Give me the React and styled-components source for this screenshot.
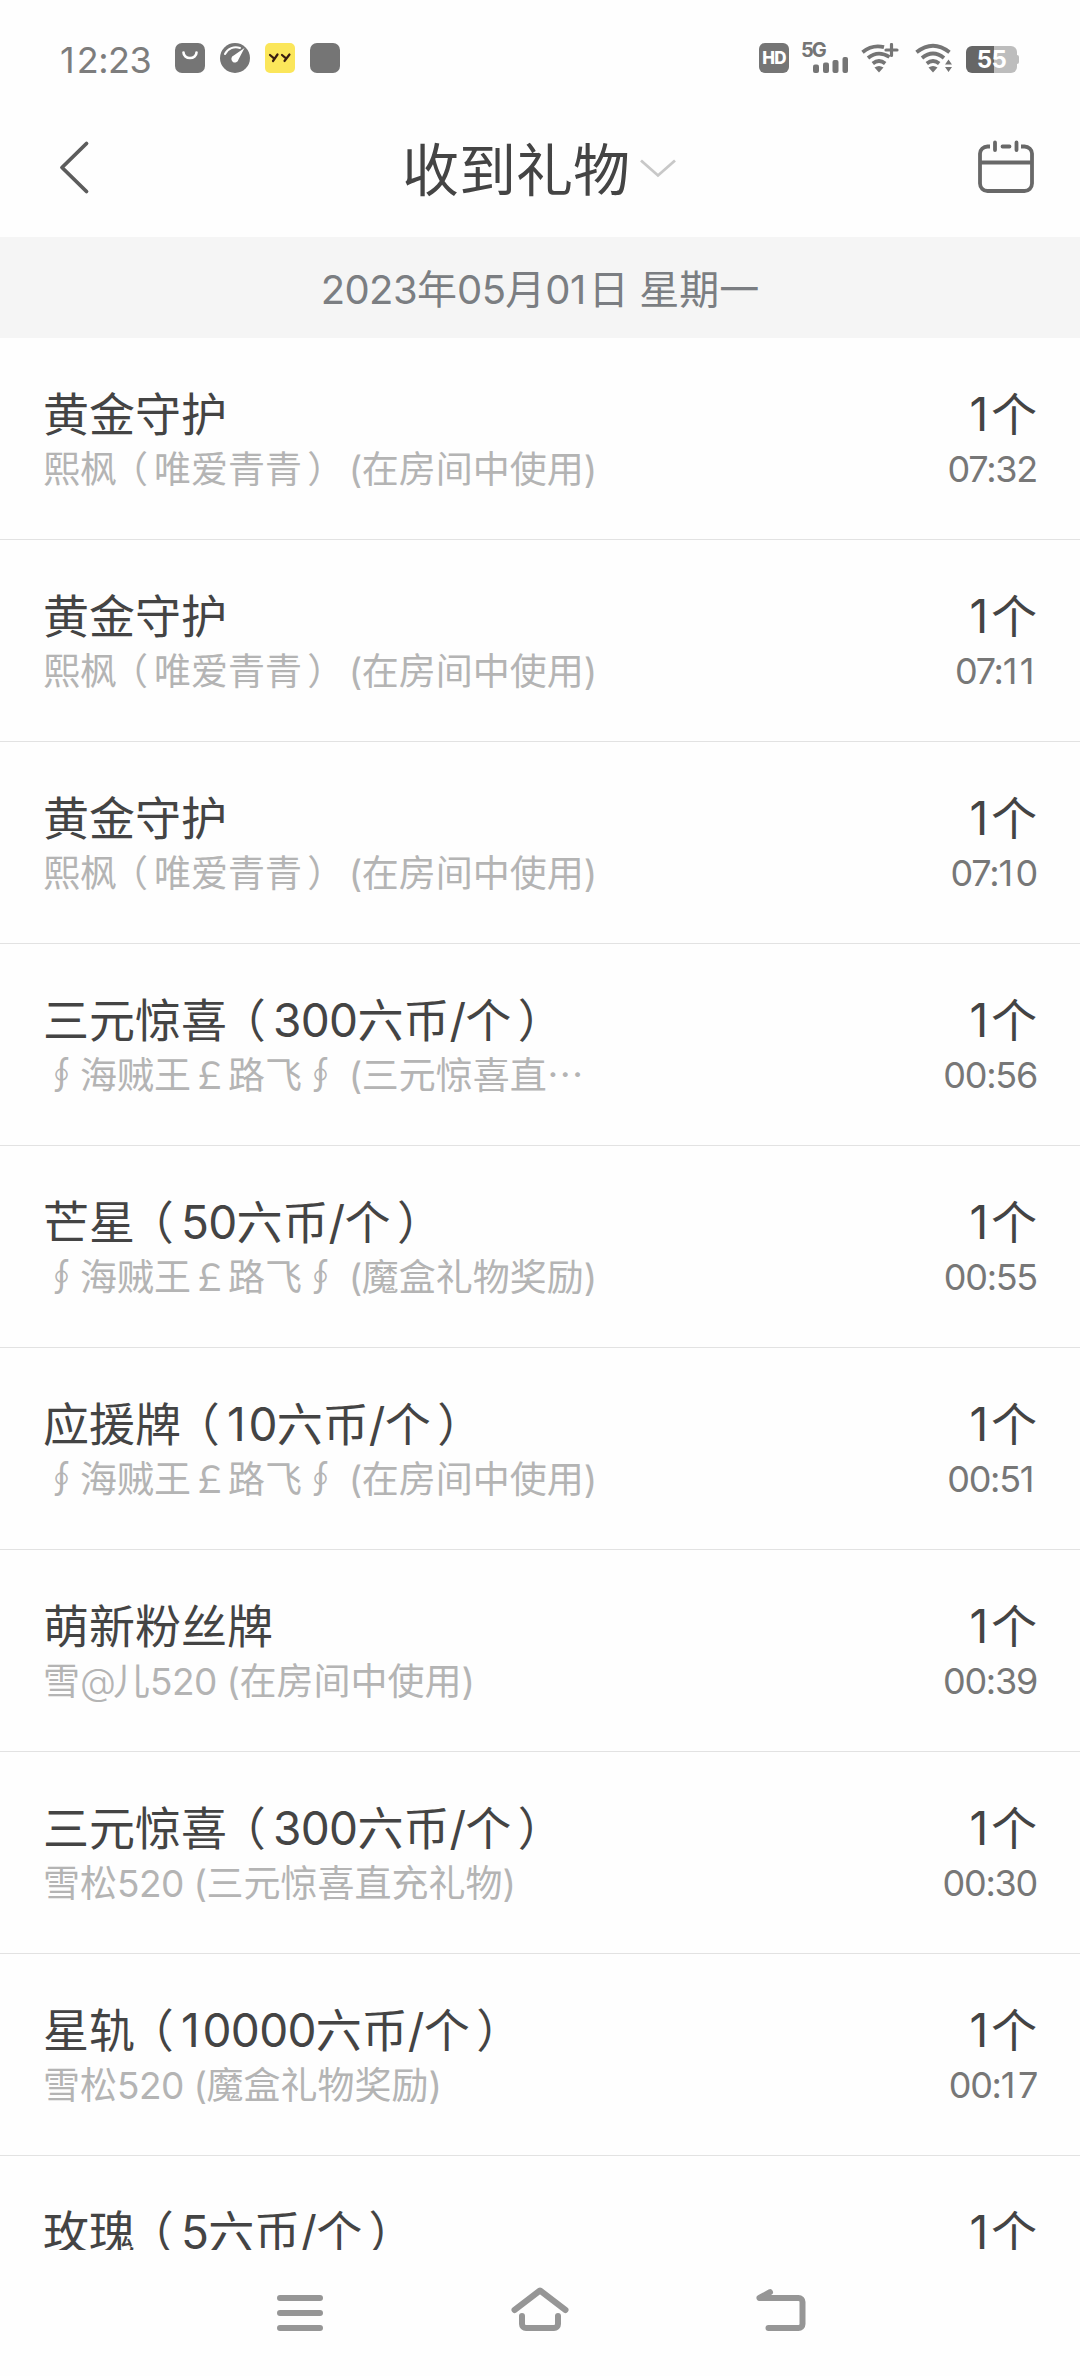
import React from 'react';
import styled, { createGlobalStyle } from 'styled-components';

const gifts = [
  { name: '黄金守护', from: '熙枫（唯爱青青） (在房间中使用)', time: '07:32' },
  { name: '黄金守护', from: '熙枫（唯爱青青） (在房间中使用)', time: '07:11' },
  { name: '黄金守护', from: '熙枫（唯爱青青） (在房间中使用)', time: '07:10' },
  { name: '三元惊喜（300六币/个）', from: '∮海贼王￡路飞∮ (三元惊喜直…', time: '00:56' },
  { name: '芒星（50六币/个）', from: '∮海贼王￡路飞∮ (魔盒礼物奖励)', time: '00:55' },
  { name: '应援牌（10六币/个）', from: '∮海贼王￡路飞∮ (在房间中使用)', time: '00:51' },
  { name: '萌新粉丝牌', from: '雪@儿520 (在房间中使用)', time: '00:39' },
  { name: '三元惊喜（300六币/个）', from: '雪松520 (三元惊喜直充礼物)', time: '00:30' },
  { name: '星轨（10000六币/个）', from: '雪松520 (魔盒礼物奖励)', time: '00:17' },
  { name: '玫瑰（5六币/个）', from: '', time: '' },
];

// latin runs get their own font, "1", "@" and the wide brackets their own spacing
const Mixed = ({ children }) =>
  children
    .split(/(1|@|（|）|[\x20-\x30\x32-\x3f\x41-\x7e]+)/)
    .filter(Boolean)
    .map((part, i) => {
      if (part === '1') return <One key={i}>1</One>;
      if (part === '@') return <At key={i}>@</At>;
      if (part === '（') return <Bracket key={i} $left={0.34}>（</Bracket>;
      if (part === '）') return <Bracket key={i} $left={0.14}>）</Bracket>;
      return /^[\x20-\x7e]/.test(part) ? <Latin key={i}>{part}</Latin> : part;
    });

const StatusIcons = () => (
  <svg width="165" height="30" viewBox="0 0 165 30">
    <rect width="30" height="30" rx="7" fill="#757575" />
    <path d="M8.5 9.5a6.5 5.5 0 0 0 13 0" fill="none" stroke="#fff" strokeWidth="2.6" strokeLinecap="round" />
    <circle cx="60" cy="15" r="15" fill="#757575" />
    <path d="M50 11a12 12 0 0 1 15-6" fill="none" stroke="#fff" strokeWidth="2" strokeLinecap="round" />
    <path d="M69.5 5L63.5 16.5a3.6 3.6 0 1 1-4.8-4z" fill="#fff" />
    <rect x="90" width="30" height="30" rx="5" fill="#fbe65a" />
    <path
      d="M95 12l4 3.4M102.500 11.500l-4.500 6.500M107 12l4 3.400M114.500 11.500l-5 6.500"
      fill="none"
      stroke="#3a1d10"
      strokeWidth="2.200"
      strokeLinecap="round"
    />
    <rect x="135" width="30" height="30" rx="7" fill="#757575" />
  </svg>
);

const Wifi = ({ plus }) => (
  <svg width="38" height="30" viewBox="0 0 38 30">
    <g fill="none" stroke="#757575" strokeWidth="3.800">
      <path d={plus ? 'M1.500 9.200Q11.500 1.200 23 4.200' : 'M1.500 9.200Q18 -3.800 34.500 9.200'} />
      <path d={plus ? 'M7 15Q17 6.800 28.500 14' : 'M7 15Q18 6 29 15'} />
      <path d="M11.800 20.500Q18 15.500 24.200 20.500" />
    </g>
    <path d="M13.500 24.500Q18 21.500 22.500 24.500L18 29.500z" fill="#757575" />
    {plus ? (
      <path d="M30.500 1.500v11M25 7h11" stroke="#757575" strokeWidth="3.200" strokeLinecap="round" />
    ) : (
      <path d="M30 21.500l3.500-5 3.500 5zM30 24l3.500 5 3.500-5z" fill="#757575" />
    )}
  </svg>
);

const SignalBars = () => (
  <svg width="36" height="16" viewBox="0 0 36 16">
    <g fill="#757575">
      <rect x="0" y="7.500" width="6" height="8.500" rx="2" />
      <rect x="10" y="5.500" width="6" height="10.500" rx="2" />
      <rect x="19.500" y="3" width="6" height="13" rx="2" />
      <rect x="29.500" y="0" width="5.500" height="16" rx="2" />
    </g>
  </svg>
);

const BackIcon = () => (
  <svg width="32" height="56" viewBox="0 0 32 56">
    <path d="M28.500 4.500L4 28.500 28.500 52.500" fill="none" stroke="#5c5c5c" strokeWidth="3.800" strokeLinecap="round" strokeLinejoin="round" />
  </svg>
);

const DropIcon = () => (
  <svg width="36" height="20" viewBox="0 0 36 20">
    <path d="M1 1.500L18 16.500 35 1.500" fill="none" stroke="#c8c8c8" strokeWidth="2.800" />
  </svg>
);

const CalendarIcon = () => (
  <svg width="56" height="54" viewBox="0 0 56 54">
    <g fill="none" stroke="#686868" strokeWidth="3.800">
      <path d="M12 6.500H9.500a7.500 7 0 0 0-7.500 7V43.500a7.500 7.500 0 0 0 7.500 7.500H46.500a7.500 7.500 0 0 0 7.500-7.500V13.500a7.500 7 0 0 0-7.500-7H43" />
      <path d="M2 22.500H54" />
      <path d="M24.500 6.500H31.500M17 2.500V10M38.500 2.500V10" strokeLinecap="round" />
    </g>
  </svg>
);

const App = () => (
  <Screen>
    <GlobalStyle />
    <StatusBar>
      <Clock>
        <Mixed>12:23</Mixed>
      </Clock>
      <StatusIcons />
      <StatusRight>
        <HdBadge>HD</HdBadge>
        <Network>
          <span>5G</span>
          <SignalBars />
        </Network>
        <Wifi plus />
        <Wifi />
        <Battery>
          <BatteryBody>55</BatteryBody>
          <BatteryTip />
        </Battery>
      </StatusRight>
    </StatusBar>

    <Header>
      <BackIcon />
      <Title>
        <span>收到礼物</span>
        <DropIcon />
      </Title>
      <CalendarIcon />
    </Header>

    <DateBar>
      <span>
        <Mixed>2023年05月01日 星期一</Mixed>
      </span>
    </DateBar>

    <List>
      {gifts.map((gift, i) => (
        <Row key={i}>
          <div>
            <Name>
              <Mixed>{gift.name}</Mixed>
            </Name>
            <From>
              <Mixed>{gift.from}</Mixed>
            </From>
          </div>
          <Side>
            <Name>
              <Mixed>1个</Mixed>
            </Name>
            <Time>
              <Mixed>{gift.time}</Mixed>
            </Time>
          </Side>
        </Row>
      ))}
    </List>

    <NavBar>
      <svg width="46" height="36" viewBox="0 0 46 36">
        <path d="M3 3H43M3 18H43M3 33H43" stroke="#969696" strokeWidth="6" strokeLinecap="round" />
      </svg>
      <svg width="58" height="44" viewBox="0 0 58 44">
        <g fill="none" stroke="#969696" strokeWidth="6" strokeLinecap="round" strokeLinejoin="round">
          <path d="M3.500 23L29 3.500 54.500 23" />
          <path d="M11 29V37a4 4 0 0 0 4 4H43a4 4 0 0 0 4-4V29" />
        </g>
      </svg>
      <svg width="50" height="42" viewBox="0 0 50 42">
        <path
          d="M14 3.200L3.500 9H42.500a4 4 0 0 1 4 4V35a4 4 0 0 1-4 4H12.500"
          fill="none"
          stroke="#969696"
          strokeWidth="6"
          strokeLinecap="round"
          strokeLinejoin="round"
        />
      </svg>
    </NavBar>
  </Screen>
);

const GlobalStyle = createGlobalStyle`
  body {
    margin: 0;
    background: #fefefe;
  }
  * {
    box-sizing: border-box;
  }
  svg {
    display: block;
    flex: none;
  }
`;

const Screen = styled.div`
  width: 1080px;
  height: 2376px;
  display: flex;
  flex-direction: column;
  overflow: hidden;
  background: #fefefe;
  color: #444;
  font-family: 'Noto Sans CJK SC', sans-serif;
`;

const Latin = styled.span`
  font-family: Inter, 'Noto Sans CJK SC', sans-serif;
  letter-spacing: -0.015em;
`;

const One = styled(Latin)`
  letter-spacing: 0.06em;
`;

const At = styled(Latin)`
  letter-spacing: -0.08em;
  font-weight: 300;
`;

// half width glyph set back into a full width cell, nearer to its middle
const Bracket = styled.span`
  font-feature-settings: 'halt';
  margin-left: ${(p) => p.$left}em;
  margin-right: ${(p) => 0.5 - p.$left}em;
`;

const StatusBar = styled.div`
  height: 101px;
  flex: none;
  display: flex;
  align-items: flex-start;
  padding: 43px 61px 0 60px;
`;

const Clock = styled.div`
  width: 115px;
  font: 400 36px/34px Inter, sans-serif;
  color: #7d7d7d;
`;

const StatusRight = styled.div`
  display: flex;
  margin-left: auto;
`;

const HdBadge = styled.div`
  width: 30px;
  height: 30px;
  border-radius: 6px;
  background: #757575;
  color: #fff;
  font: 800 17px/31px Inter, sans-serif;
  letter-spacing: -0.8px;
  text-align: center;
  margin-right: 12px;
`;

const Network = styled.div`
  width: 60px;
  span {
    display: block;
    height: 14px;
    font: 700 20px/15px Inter, sans-serif;
    letter-spacing: -2px;
    color: #757575;
  }
  svg {
    margin-left: 12px;
  }
  & + svg {
    margin-right: 16px;
  }
`;

const Battery = styled.div`
  display: flex;
  align-items: center;
  height: 27px;
  margin: 3px 0 0 13px;
`;

const BatteryBody = styled.div`
  width: 51px;
  height: 27px;
  border-radius: 6px;
  background: linear-gradient(90deg, #666 28px, #bdbdbd 28px);
  color: #fff;
  font: 700 24px/27px Inter, sans-serif;
  letter-spacing: -0.5px;
  text-align: center;
`;

const BatteryTip = styled.div`
  width: 2px;
  height: 9px;
  border-radius: 0 2px 2px 0;
  background: #bdbdbd;
`;

const Header = styled.div`
  height: 136px;
  flex: none;
  display: flex;
  justify-content: space-between;
  align-items: center;
  padding: 0 46px 4px 58px;
`;

const Title = styled.div`
  display: flex;
  align-items: center;
  margin-left: 10px;
  font-size: 57px;
  line-height: 60px;
  span {
    margin-bottom: 2px;
  }
  svg {
    margin: 4px 0 0 10px;
  }
`;

const DateBar = styled.div`
  height: 101px;
  flex: none;
  display: flex;
  justify-content: center;
  align-items: center;
  padding-top: 1px;
  background: #f5f5f5;
  color: #7b7e82;
  font-size: 40px;
  line-height: 50px;
`;

const List = styled.div`
  height: 1912px;
  flex: none;
  overflow: hidden;
`;

const Row = styled.div`
  height: 202px;
  display: flex;
  justify-content: space-between;
  padding: 43px 43px 0;
  border-bottom: 1px solid #e2e2e2;
  white-space: nowrap;
`;

const Name = styled.div`
  height: 61px;
  font-size: 46px;
  line-height: 60px;
`;

const From = styled.div`
  height: 50px;
  font-size: 37px;
  line-height: 50px;
  color: #b4b4b4;
`;

const Side = styled.div`
  text-align: right;
`;

const Time = styled.div`
  font: 400 36px/54px Inter, sans-serif;
  color: #777;
  ${Latin} {
    letter-spacing: -0.035em;
  }
  ${One} {
    letter-spacing: 0.07em;
  }
`;

const NavBar = styled.div`
  flex: 1;
  display: flex;
  align-items: flex-end;
  padding: 0 274px 45px 277px;
  justify-content: space-between;
`;

export default App;
